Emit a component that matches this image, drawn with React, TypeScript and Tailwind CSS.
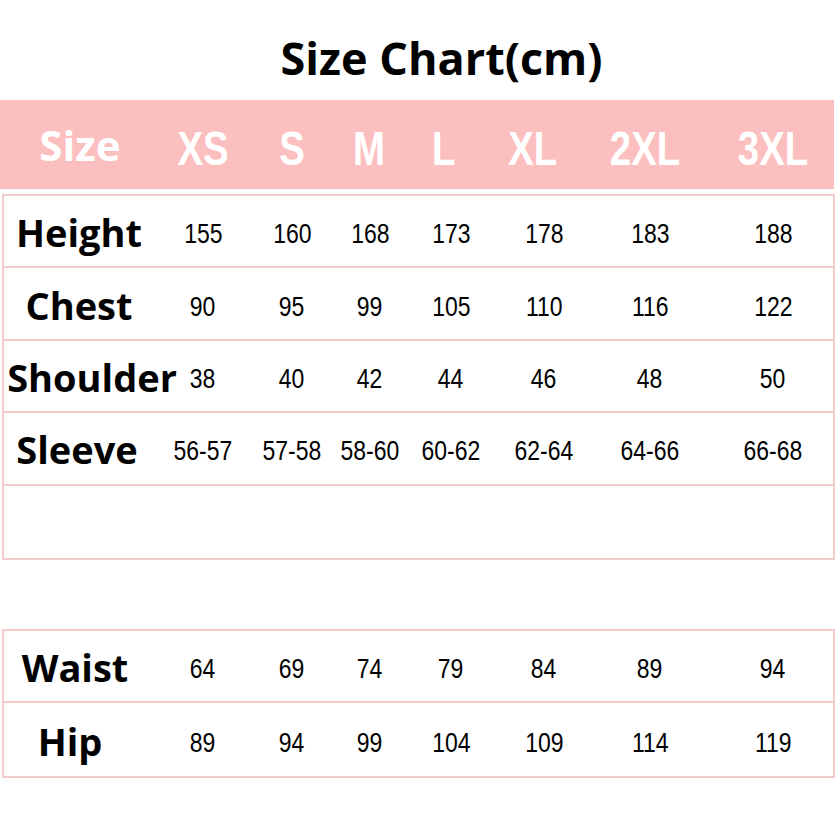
const sizes = ['XS', 'S', 'M', 'L', 'XL', '2XL', '3XL']

const upper = [
  { label: 'Height', shift: 'pr-[6px]', values: ['155', '160', '168', '173', '178', '183', '188'] },
  { label: 'Chest', shift: 'pr-[6px]', values: ['90', '95', '99', '105', '110', '116', '122'] },
  { label: 'Shoulder', shift: 'pl-[20px]', values: ['38', '40', '42', '44', '46', '48', '50'] },
  { label: 'Sleeve', shift: 'pr-[10px]', values: ['56-57', '57-58', '58-60', '60-62', '62-64', '64-66', '66-68'] },
  { label: '', shift: '', values: ['', '', '', '', '', '', ''] },
]

const lower = [
  { label: 'Waist', shift: 'pr-[14px]', values: ['64', '69', '74', '79', '84', '89', '94'] },
  { label: 'Hip', shift: 'pr-[24px]', values: ['89', '94', '99', '104', '109', '114', '119'] },
]

const labelFont = "font-['Open_Sans','DejaVu_Sans',sans-serif]"
const arialFont = "font-['Liberation_Sans','Arial',sans-serif]"

const Row = ({ label, shift, values, last }: { label: string; shift: string; values: string[]; last?: boolean }) => (
  <div
    className={`grid h-[72.4px] grid-cols-[156px_86px_92px_64px_98px_88px_124px_122px] items-center ${
      last ? '' : 'border-b-2 border-[#f3cdcd]'
    }`}
  >
    <div className={`flex justify-center whitespace-nowrap pt-[2px] text-[38px] font-bold leading-none text-black ${labelFont} ${shift}`}>
      {label}
    </div>
    {values.map((v, i) => (
      <div key={i} className="flex justify-center pt-[6px]">
        <span className={`inline-block scale-x-[0.82] whitespace-nowrap text-[28px] leading-none text-black ${arialFont}`}>
          {v}
        </span>
      </div>
    ))}
  </div>
)

export default function App() {
  return (
    <div className="h-[828px] w-[837px] bg-white">
      {/* Title */}
      <div className="flex h-[100px] items-center justify-center pl-[46px] pt-[14px]">
        <h1 className={`text-[45px] font-bold leading-none text-black ${labelFont}`}>Size Chart(cm)</h1>
      </div>

      {/* Size header */}
      <div className="grid h-[89px] w-[834px] grid-cols-[160px_86px_92px_62px_88px_90px_134px_122px] items-center bg-[#fcbfbf]">
        <div className={`text-center text-[42px] font-bold leading-none text-white ${labelFont}`}>Size</div>
        {sizes.map((s) => (
          <div key={s} className="flex justify-center pt-[8px]">
            <span className={`inline-block scale-x-[0.8] text-[48px] font-bold leading-none text-white ${arialFont}`}>
              {s}
            </span>
          </div>
        ))}
      </div>

      {/* Upper table */}
      <div className="ml-[2px] mt-[5px] w-[833px] border-2 border-[#f3cdcd]">
        {upper.map((r, i) => (
          <Row key={i} label={r.label} shift={r.shift} values={r.values} last={i === upper.length - 1} />
        ))}
      </div>

      {/* Lower table */}
      <div className="ml-[2px] mt-[69px] w-[833px] border-2 border-[#f3cdcd]">
        {lower.map((r, i) => (
          <Row key={i} label={r.label} shift={r.shift} values={r.values} last={i === lower.length - 1} />
        ))}
      </div>
    </div>
  )
}
